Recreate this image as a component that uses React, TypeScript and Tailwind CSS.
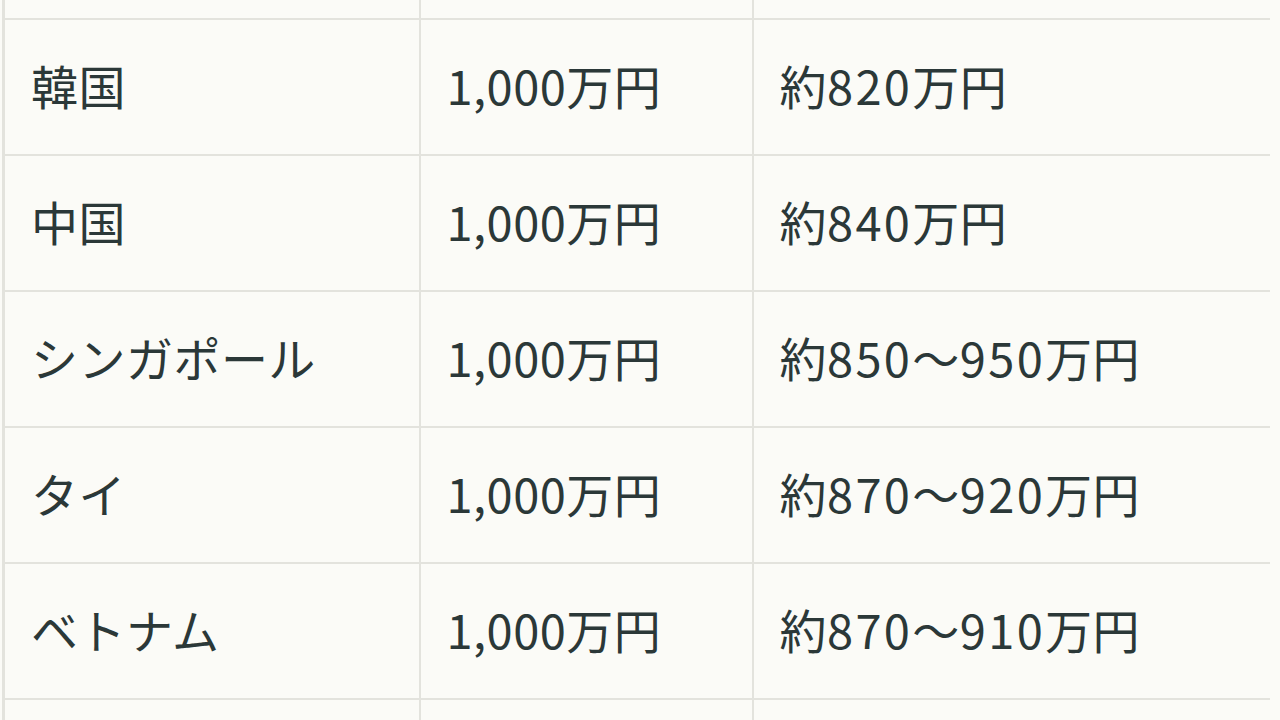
const rows = [
  { country: "韓国", base: "1,000万円", value: "約820万円" },
  { country: "中国", base: "1,000万円", value: "約840万円" },
  { country: "シンガポール", base: "1,000万円", value: "約850〜950万円" },
  { country: "タイ", base: "1,000万円", value: "約870〜920万円" },
  { country: "ベトナム", base: "1,000万円", value: "約870〜910万円" },
];

const cell = "border-r-2 border-b-2 border-[#e3e3dd] pl-[26px] align-middle";
const lastCell = "border-b-2 border-[#e3e3dd] pl-[26px] align-middle";

function Text({ value, wide = false }: { value: string; wide?: boolean }) {
  const parts = value.split(/([0-9]+)/).filter(Boolean);
  return (
    <span className="relative -top-[3px] tracking-[0.01em]">
      {parts.map((p, i) =>
        wide && /[0-9]/.test(p) ? (
          <span key={i} className="tracking-[0.05em]">
            {p}
          </span>
        ) : (
          <span key={i}>{p}</span>
        ),
      )}
    </span>
  );
}

export default function App() {
  return (
    <div
      className="h-[720px] w-[1280px] overflow-hidden bg-[#fbfbf7] text-[#2b3838]"
      style={{ fontFamily: '"Noto Sans CJK JP", "Noto Sans", sans-serif' }}
    >
      <table className="ml-[2px] w-[1268px] table-fixed border-collapse border-l-[3px] border-[#e3e3dd] text-[47px] leading-none">
        <colgroup>
          <col className="w-[416px]" />
          <col className="w-[333px]" />
          <col />
        </colgroup>
        <tbody>
          <tr className="h-[19px]">
            <td className={cell} />
            <td className={cell} />
            <td className={lastCell} />
          </tr>
          {rows.map((r) => (
            <tr key={r.country} className="h-[136px]">
              <td className={cell}>
                <Text value={r.country} />
              </td>
              <td className={cell}>
                <Text value={r.base} />
              </td>
              <td className={lastCell}>
                <Text value={r.value} wide />
              </td>
            </tr>
          ))}
          <tr className="h-[40px]">
            <td className={cell} />
            <td className={cell} />
            <td className={lastCell} />
          </tr>
        </tbody>
      </table>
    </div>
  );
}
